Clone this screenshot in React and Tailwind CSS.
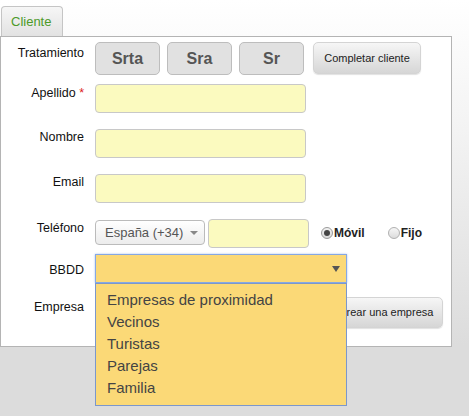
import React from 'react'

const font = { fontFamily: '"Liberation Sans", Arial, sans-serif' }

function Label({ children, className = '' }) {
  return (
    <div className={'w-[83px] shrink-0 text-right text-[12.5px] leading-[14px] text-[#111] ' + className}>
      {children}
    </div>
  )
}

function YellowInput({ className = '' }) {
  return <div className={'h-[29px] rounded-[4px] border border-[#c8c8c8] bg-[#fbfabf] ' + className} />
}

export default function App() {
  const bbdd = ['Empresas de proximidad', 'Vecinos', 'Turistas', 'Parejas', 'Familia']

  return (
    <div
      className="h-[416px] w-[469px] overflow-hidden bg-[linear-gradient(to_bottom,#ffffff_0px,#f4f4f4_120px,#dcdcdc_345px)]"
      style={font}
    >
      {/* tab */}
      <div className="flex pt-[6px] pl-[1px]">
        <div className="flex h-[30px] w-[62px] items-center rounded-t-[4px] border border-b-0 border-[#c5c5c5] bg-[linear-gradient(to_bottom,#f6f6f6,#e2e2e2)] pl-[9px] text-[13px] text-[#4c9a2a]">
          Cliente
        </div>
      </div>

      {/* panel */}
      <div className="w-[452px] border border-[#b4b4b4] bg-white pt-[5px] pb-[18px]">
        {/* Tratamiento */}
        <div className="flex h-[33px]">
          <Label className="pt-[4px]">Tratamiento</Label>
          <div className="ml-[11px] flex gap-[7px]">
            {['Srta', 'Sra', 'Sr'].map(t => (
              <div
                key={t}
                className="flex h-[33px] w-[65px] items-center justify-center rounded-[5px] border border-[#bdbdbd] bg-[#e1e1e1] text-[16px] font-bold text-[#555]"
              >
                {t}
              </div>
            ))}
          </div>
          <div className="ml-[9px] flex h-[32px] w-[108px] items-center justify-center rounded-[5px] border border-[#d4d4d4] bg-[linear-gradient(to_bottom,#f6f6f6,#d6d6d6)] text-[11px] text-[#222] shadow-[0_1px_1px_rgba(0,0,0,0.12)]">
            Completar cliente
          </div>
        </div>

        {/* Apellido */}
        <div className="mt-[9px] flex h-[29px]">
          <Label className="pt-[2px]">
            Apellido <span className="text-[#d22]">*</span>
          </Label>
          <YellowInput className="ml-[11px] w-[211px]" />
        </div>

        {/* Nombre */}
        <div className="mt-[16px] flex h-[29px]">
          <Label className="pt-[1px]">Nombre</Label>
          <YellowInput className="ml-[11px] w-[211px]" />
        </div>

        {/* Email */}
        <div className="mt-[16px] flex h-[29px]">
          <Label className="pt-[1px]">Email</Label>
          <YellowInput className="ml-[11px] w-[211px]" />
        </div>

        {/* Telefono */}
        <div className="mt-[16px] flex h-[29px]">
          <Label className="pt-[2px]">Teléfono</Label>
          <div className="ml-[11px] mt-[1px] flex h-[25px] w-[110px] items-center justify-between rounded-[4px] border border-[#bbb] bg-[linear-gradient(to_bottom,#ffffff,#ececec)] pl-[9px] pr-[6px] text-[13px] text-[#555]">
            <span>España (+34)</span>
            <span className="h-0 w-0 border-x-[4px] border-t-[4px] border-x-transparent border-t-[#888]" />
          </div>
          <YellowInput className="ml-[3px] w-[101px]" />
          <div className="ml-[12px] flex items-center gap-[1px] pb-[2px]">
            <span className="flex h-[12px] w-[12px] items-center justify-center rounded-full border border-[#9a9a9a] bg-[linear-gradient(to_bottom,#f2f2f2,#d8d8d8)]">
              <span className="h-[6px] w-[6px] rounded-full bg-[#444]" />
            </span>
            <span className="text-[12px] font-bold text-[#222]">Móvil</span>
          </div>
          <div className="ml-[23px] flex items-center gap-[1px] pb-[2px]">
            <span className="h-[12px] w-[12px] rounded-full border border-[#b0b0b0] bg-[linear-gradient(to_bottom,#f6f6f6,#dcdcdc)]" />
            <span className="text-[12px] font-bold text-[#222]">Fijo</span>
          </div>
        </div>

        {/* BBDD */}
        <div className="mt-[6px] flex h-[29px]">
          <Label className="pt-[9px]">BBDD</Label>
          <div className="relative ml-[11px] w-[252px]">
            <div className="flex h-[29px] items-center justify-end border border-[#86a8e4] bg-[#fbd977] pr-[6px] shadow-[0_0_2px_#a9c4f0]">
              <span className="h-0 w-0 border-x-[4px] border-t-[6px] border-x-transparent border-t-[#555]" />
            </div>
            <div className="absolute left-0 top-full z-10 w-[252px] border border-[#7b97cc] bg-[#fbd977] pt-[5px] pb-[6px] pl-[11px] text-[15px] leading-[22px] text-[#444]">
              {bbdd.map(o => (
                <div key={o}>{o}</div>
              ))}
            </div>
          </div>
        </div>

        {/* Empresa */}
        <div className="mt-[14px] flex h-[31px]">
          <Label className="pt-[3px]">Empresa</Label>
          <div className="ml-[245px] flex h-[31px] w-[114px] items-center justify-center rounded-[5px] border border-[#d4d4d4] bg-[linear-gradient(to_bottom,#f6f6f6,#d6d6d6)] text-[11px] text-[#222] shadow-[0_1px_1px_rgba(0,0,0,0.12)]">
            Crear una empresa
          </div>
        </div>
      </div>
    </div>
  )
}
